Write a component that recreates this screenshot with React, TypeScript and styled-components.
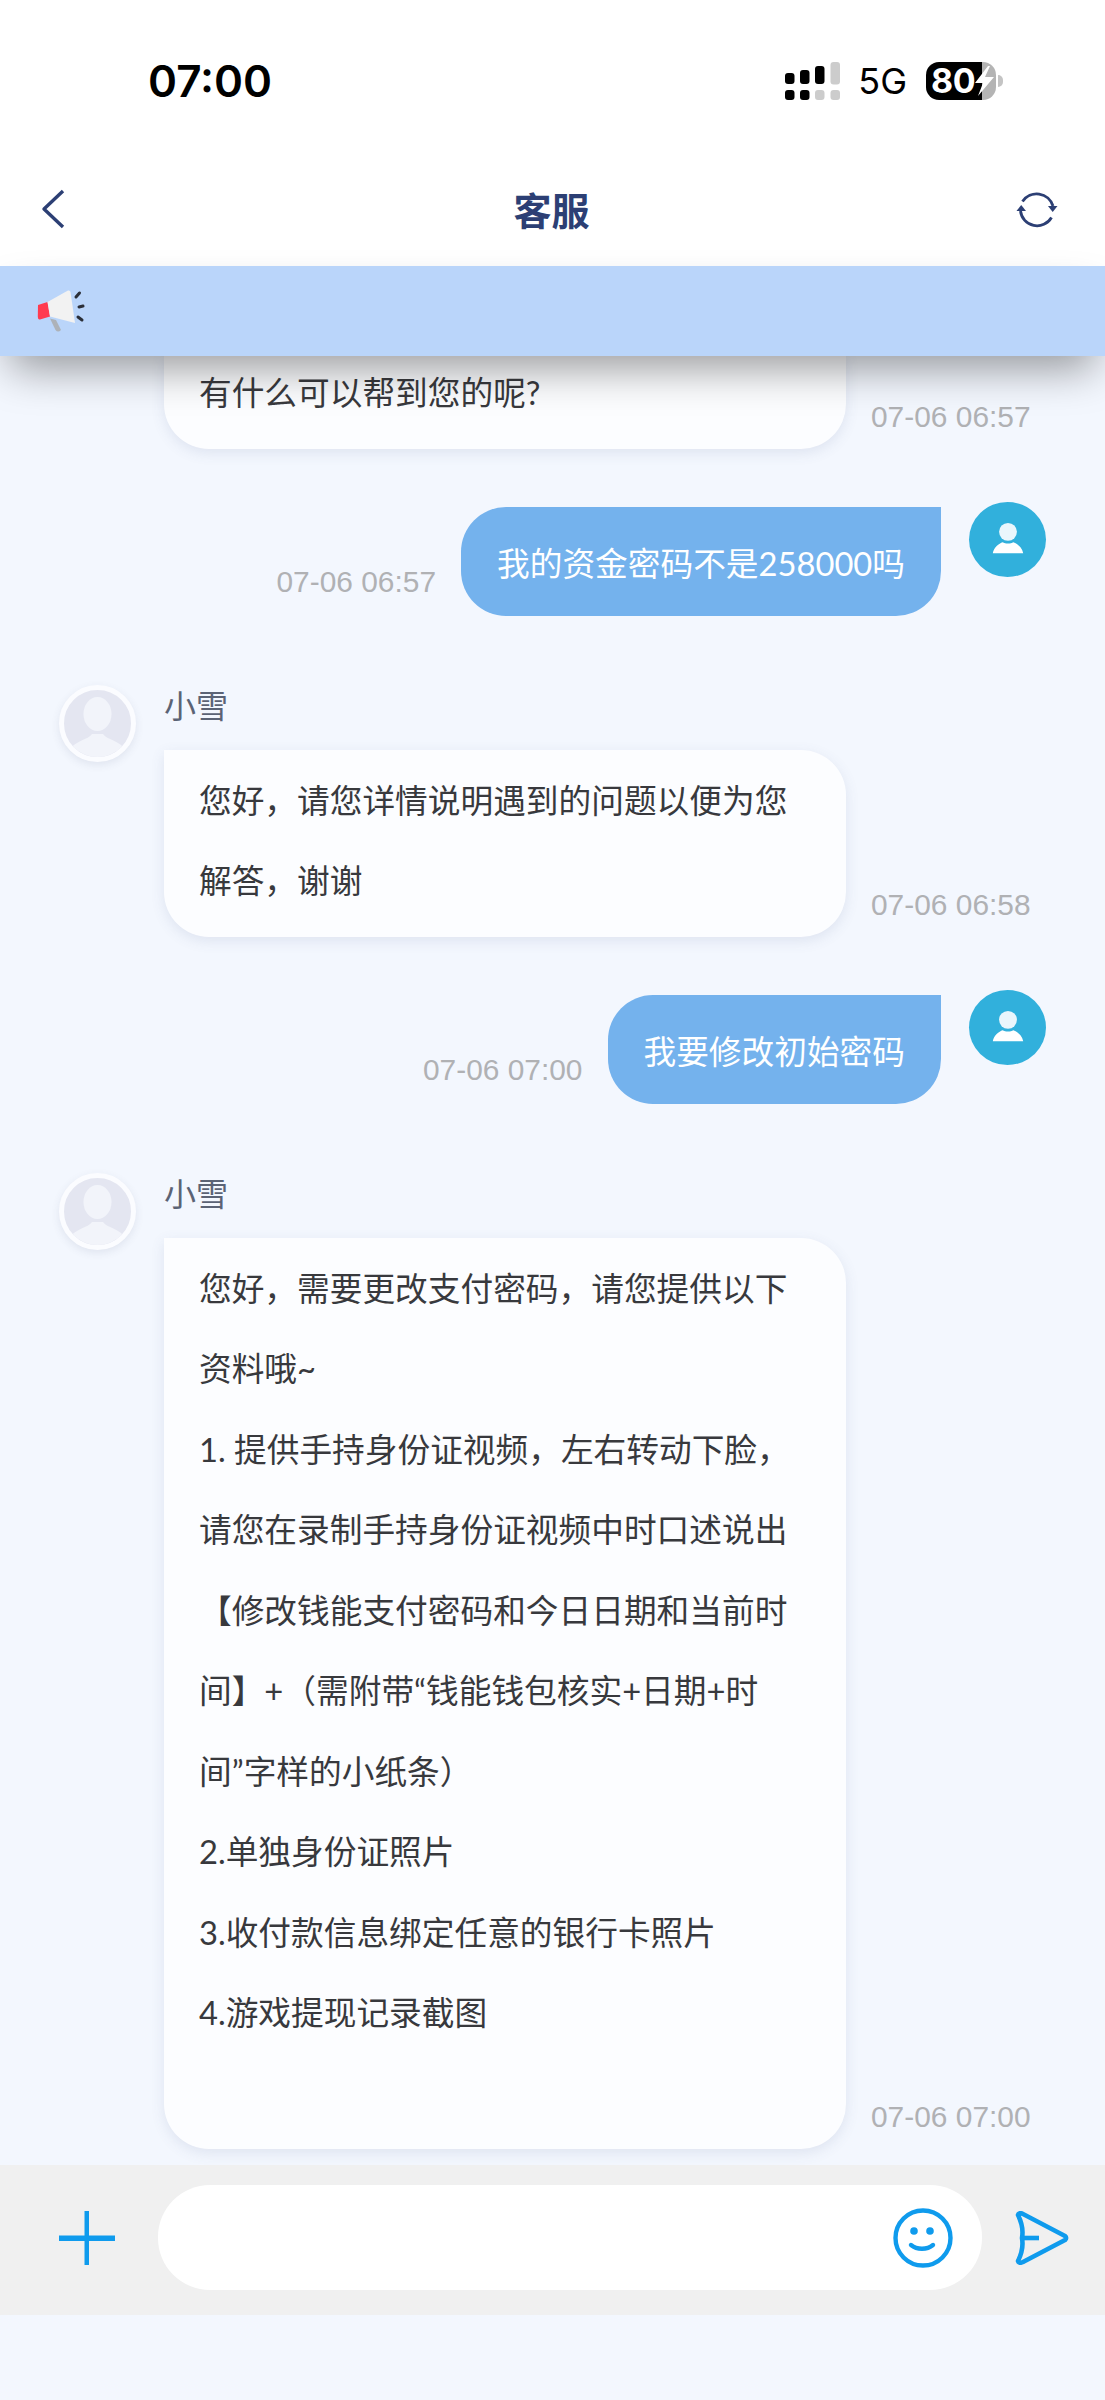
import React from 'react';
import styled, {createGlobalStyle} from 'styled-components';

const GlobalStyle = createGlobalStyle`
	html, body {
		margin: 0;
		padding: 0;
		background: #f3f7fe;
	}
	* {
		box-sizing: border-box;
	}
`;

const FONT = `Lato, "Noto Sans CJK SC", "Noto Sans", sans-serif`;

const Page = styled.div`
	width: 1105px;
	height: 2400px;
	display: flex;
	flex-direction: column;
	background: #f3f7fe;
	font-family: ${FONT};
	overflow: hidden;
`;

const StatusBar = styled.div`
	height: 162px;
	flex: none;
	display: flex;
	align-items: center;
	justify-content: space-between;
	padding: 0 109px 0 148px;
	background: #fff;
	font-family: Inter, sans-serif;
`;

const Clock = styled.div`
	font-size: 44px;
	font-weight: 600;
	color: #000;
`;

const StatusIcons = styled.div`
	display: flex;
	align-items: center;
	gap: 19px;
`;

const NetworkLabel = styled.div`
	font-size: 36px;
	font-weight: 400;
	color: #000;
	line-height: 38px;
	margin-left: -2px;
`;

const Battery = styled.div`
	position: relative;
	width: 70px;
	height: 38px;
	border-radius: 13px;
	background: linear-gradient(to right, #000 56px, #b4b4b4 56px);
	display: flex;
	align-items: center;
	padding-left: 5px;

	&::after {
		content: '';
		position: absolute;
		right: -7px;
		top: 13px;
		width: 5px;
		height: 12px;
		border-radius: 0 6px 6px 0;
		background: #c4c4c4;
	}
`;

const BatteryLevel = styled.span`
	font-size: 34px;
	font-weight: 700;
	color: #fff;
	line-height: 38px;
	letter-spacing: -0.5px;
`;

const NavBar = styled.div`
	height: 104px;
	flex: none;
	display: grid;
	grid-template-columns: 1fr auto 1fr;
	align-items: center;
	padding: 0 42px 10px 40px;
	background: #fff;
`;

const NavTitle = styled.div`
	font-size: 38px;
	font-weight: 600;
	color: #2c3f74;
	line-height: 40px;
	font-family: "Noto Sans CJK SC", sans-serif;
`;

const NavRight = styled.div`
	display: flex;
	justify-content: flex-end;
	margin-right: 5px;
`;

const Notice = styled.div`
	position: relative;
	z-index: 2;
	height: 90px;
	flex: none;
	display: flex;
	align-items: center;
	padding-left: 30px;
	background: #bad5fa;
	box-shadow: 0 22px 44px -10px rgba(0, 0, 0, 0.4);
`;

const Chat = styled.div`
	height: 1809px;
	flex: none;
	display: flex;
	flex-direction: column;
	overflow: hidden;
`;

const Row = styled.div<{$mine?: boolean; $gap?: number}>`
	display: flex;
	align-items: flex-start;
	justify-content: ${p => (p.$mine ? 'flex-end' : 'flex-start')};
	padding: 0 59px;
	margin-top: ${p => p.$gap || 0}px;
`;

const Avatar = styled.div<{$mine?: boolean}>`
	width: 77px;
	height: ${p => (p.$mine ? 75 : 77)}px;
	flex: none;
	border-radius: 50%;
	overflow: hidden;
	background: ${p => (p.$mine ? '#31b0dc' : '#e4e6f1')};
	border: ${p => (p.$mine ? 'none' : '5px solid #fbfcff')};
	box-shadow: ${p => (p.$mine ? 'none' : '0 3px 8px rgba(60, 70, 110, 0.1)')};
	display: flex;
	align-items: center;
	justify-content: center;
`;

const Column = styled.div<{$clipped?: boolean}>`
	display: flex;
	flex-direction: column;
	margin-left: ${p => (p.$clipped ? 105 : 28)}px;
	margin-top: ${p => (p.$clipped ? -3 : 0)}px;
`;

const Name = styled.div`
	font-size: 32px;
	line-height: 40px;
	color: #5b6375;
	margin-top: 1px;
	margin-bottom: 24px;
`;

const Bubble = styled.div<{$flat?: boolean}>`
	width: 682px;
	padding: ${p => (p.$flat ? '0 35px 15px' : '11px 35px 15px')};
	background: #fcfdff;
	color: #38393d;
	border-radius: ${p => (p.$flat ? '0 0 45px 45px' : '0 45px 45px 45px')};
	box-shadow: 0 4px 14px rgba(70, 90, 140, 0.12);
`;

const Line = styled.div`
	font-size: 32.7px;
	line-height: 80.5px;
	min-height: 80.5px;
	white-space: nowrap;
`;

const MyBubble = styled.div`
	margin-top: 5px;
	padding: 0 36px;
	height: 109px;
	display: flex;
	align-items: center;
	background: #74b2ed;
	color: #fff;
	font-size: 32.7px;
	white-space: nowrap;
	border-radius: 45px 0 45px 45px;
`;

const Time = styled.div<{$mine?: boolean}>`
	align-self: flex-end;
	flex: none;
	font-family: "Liberation Sans", sans-serif;
	font-size: 29.9px;
	line-height: 40px;
	color: #b0b1b4;
	margin: ${p => (p.$mine ? '0 25px 14px 0' : '0 0 12px 25px')};
`;

const MyAvatarSlot = styled.div`
	margin-left: 28px;
`;

const Composer = styled.div`
	height: 150px;
	flex: none;
	display: flex;
	align-items: flex-start;
	padding: 20px 0 0 58px;
	background: #f0f0f0;
`;

const PlusSlot = styled.div`
	width: 100px;
	height: 105px;
	flex: none;
	display: flex;
	align-items: center;
`;

const Input = styled.div`
	width: 824px;
	height: 105px;
	flex: none;
	display: flex;
	align-items: center;
	justify-content: flex-end;
	padding-right: 29px;
	border-radius: 52px;
	background: #fff;
`;

const SendSlot = styled.div`
	height: 105px;
	margin-left: 33px;
	display: flex;
	align-items: center;
`;

const SignalIcon = () => (
	<svg width="56" height="38" viewBox="0 0 56 38">
		<rect x="0" y="11" width="9.5" height="11" rx="3" fill="#000" />
		<rect x="15" y="8" width="9.5" height="14" rx="3" fill="#000" />
		<rect x="30" y="4" width="9.5" height="18" rx="3" fill="#000" />
		<rect x="45.5" y="0" width="9.5" height="22.5" rx="3" fill="#ccc" />
		<rect x="0" y="28" width="9.5" height="10" rx="3" fill="#000" />
		<rect x="15" y="28" width="9.5" height="10" rx="3" fill="#000" />
		<rect x="30" y="28" width="9.5" height="10" rx="3" fill="#ccc" />
		<rect x="45.5" y="28" width="9.5" height="10" rx="3" fill="#ccc" />
	</svg>
);

const BoltIcon = () => (
	<svg width="20" height="30" viewBox="0 0 20 30">
		<path d="M13 0 L0 17 H8 L3 30 L19 11 H10 L15 0 Z" fill="#fff" />
	</svg>
);

const BackIcon = () => (
	<svg width="25" height="40" viewBox="0 0 25 40" fill="none">
		<path d="M23 2 L4 20 L23 38" stroke="#2c3f74" strokeWidth="3.4" strokeLinejoin="round" />
	</svg>
);

const RefreshIcon = () => (
	<svg width="42" height="38" viewBox="0 0 42 38" fill="none">
		<path d="M6.5 11.5 A17 17 0 0 1 37 16" stroke="#2c3f74" strokeWidth="2.8" />
		<path d="M4.5 21 A16.7 16.7 0 0 0 35.5 27.5" stroke="#2c3f74" strokeWidth="2.8" />
		<path d="M32 16 H41.5 L36.7 22 Z" fill="#2c3f74" />
		<path d="M0.5 21 H10 L5.2 15 Z" fill="#2c3f74" />
	</svg>
);

const MegaphoneIcon = () => (
	<svg width="60" height="60" viewBox="30 30 60 60" fill="none">
		<path d="M38 54 L47.5 51 L50 65.5 L40 68.5 Q38 69 37.8 66 Z" fill="#ff3b50" />
		<path d="M47.5 51 L68 39.5 Q70 39 70.5 41 L75 72 L50 65.5 Z" fill="#f2f2f2" />
		<path d="M50 67.5 L56 69 L61 79 Q58 82 55.5 79 Z" fill="#adb2b8" />
		<path d="M76 46 L79.5 42" stroke="#2b2f38" strokeWidth="3" strokeLinecap="round" />
		<path d="M79 56 L83 55" stroke="#2b2f38" strokeWidth="3" strokeLinecap="round" />
		<path d="M78 66 L82 69" stroke="#2b2f38" strokeWidth="3" strokeLinecap="round" />
	</svg>
);

const GuestFigure = () => (
	<svg width="67" height="67" viewBox="0 0 67 67">
		<ellipse cx="33.5" cy="24" rx="14" ry="17" fill="#f2f4fa" />
		<path d="M5 60 C12 50 24 50 28 44 H39 C43 50 55 50 62 60 C52 70 15 70 5 60 Z" fill="#f2f4fa" />
	</svg>
);

const MyFigure = () => (
	<svg width="36" height="34" viewBox="0 0 40 38">
		<circle cx="20" cy="11" r="10" fill="#eaf6fc" />
		<path d="M3 35 C4 28 10 24 14 22.5 C17 24.5 23 24.5 26 22.5 C30 24 36 28 37 35 Z" fill="#fff" />
	</svg>
);

const PlusIcon = () => (
	<svg width="58" height="54" viewBox="0 0 58 54">
		<rect x="26.5" y="0" width="4.5" height="54" fill="#0f9bed" />
		<rect x="1" y="24.5" width="56" height="5.5" fill="#0f9bed" />
	</svg>
);

const SmileIcon = () => (
	<svg width="60" height="60" viewBox="0 0 60 60" fill="none" stroke="#0f9bed" strokeWidth="4.4">
		<circle cx="30" cy="30" r="27.5" />
		<circle cx="21" cy="23" r="3.8" fill="#0f9bed" stroke="none" />
		<circle cx="37" cy="23" r="3.8" fill="#0f9bed" stroke="none" />
		<path d="M18 37 C24 42 34 42 40 37" strokeLinecap="round" />
	</svg>
);

const SendIcon = () => (
	<svg width="54" height="54" viewBox="0 0 54 54" fill="none" stroke="#0f9bed" strokeWidth="4.6" strokeLinejoin="round">
		<path d="M3 4 Q4 1 8 3 L50 25 Q52 27 50 29 L8 51 Q4 53 3 50 Q9 38 7 27 Q9 16 3 4 Z" />
		<path d="M7 27 H24" />
	</svg>
);

const GuestMessage: React.FunctionComponent<{lines: string[]; time: string; gap: number}> = ({lines, time, gap}) => (
	<Row $gap={gap}>
		<Avatar>
			<GuestFigure />
		</Avatar>
		<Column>
			<Name>小雪</Name>
			<Bubble>
				{lines.map((line, i) => (
					<Line key={i}>{line}</Line>
				))}
			</Bubble>
		</Column>
		<Time>{time}</Time>
	</Row>
);

const MyMessage: React.FunctionComponent<{text: string; time: string; gap: number}> = ({text, time, gap}) => (
	<Row $mine $gap={gap}>
		<Time $mine>{time}</Time>
		<MyBubble>{text}</MyBubble>
		<MyAvatarSlot>
			<Avatar $mine>
				<MyFigure />
			</Avatar>
		</MyAvatarSlot>
	</Row>
);

const LONG_REPLY = [
	'您好，需要更改支付密码，请您提供以下',
	'资料哦~',
	'1. 提供手持身份证视频，左右转动下脸，',
	'请您在录制手持身份证视频中时口述说出',
	'【修改钱能支付密码和今日日期和当前时',
	'间】+（需附带“钱能钱包核实+日期+时',
	'间”字样的小纸条）',
	'2.单独身份证照片',
	'3.收付款信息绑定任意的银行卡照片',
	'4.游戏提现记录截图',
	''
];

const App: React.FunctionComponent = () => {
	return (
		<Page>
			<GlobalStyle />
			<StatusBar>
				<Clock>07:00</Clock>
				<StatusIcons>
					<SignalIcon />
					<NetworkLabel>5G</NetworkLabel>
					<Battery>
						<BatteryLevel>80</BatteryLevel>
						<BoltIcon />
					</Battery>
				</StatusIcons>
			</StatusBar>
			<NavBar>
				<BackIcon />
				<NavTitle>客服</NavTitle>
				<NavRight>
					<RefreshIcon />
				</NavRight>
			</NavBar>
			<Notice>
				<MegaphoneIcon />
			</Notice>
			<Chat>
				<Row>
					<Column $clipped>
						<Bubble $flat>
							<Line>有什么可以帮到您的呢?</Line>
						</Bubble>
					</Column>
					<Time>07-06 06:57</Time>
				</Row>
				<MyMessage gap={53} text="我的资金密码不是258000吗" time="07-06 06:57" />
				<GuestMessage
					gap={69}
					lines={['您好，请您详情说明遇到的问题以便为您', '解答，谢谢']}
					time="07-06 06:58"
				/>
				<MyMessage gap={53} text="我要修改初始密码" time="07-06 07:00" />
				<GuestMessage gap={69} lines={LONG_REPLY} time="07-06 07:00" />
			</Chat>
			<Composer>
				<PlusSlot>
					<PlusIcon />
				</PlusSlot>
				<Input>
					<SmileIcon />
				</Input>
				<SendSlot>
					<SendIcon />
				</SendSlot>
			</Composer>
		</Page>
	);
};

export default App;
